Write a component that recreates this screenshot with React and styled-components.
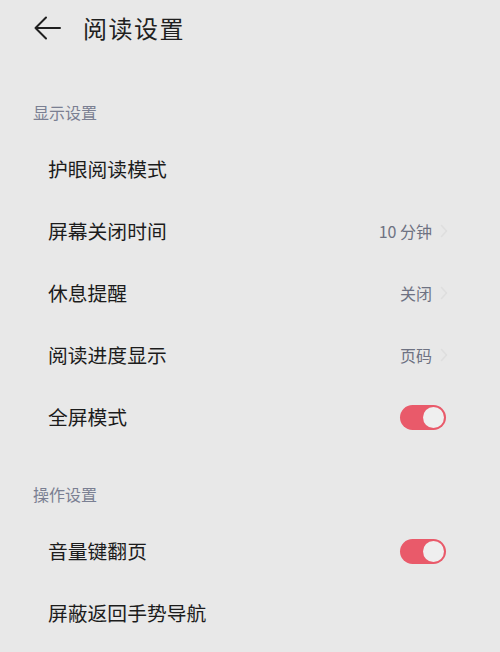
import React from "react";
import styled, { createGlobalStyle } from "styled-components";

const Global = createGlobalStyle`
  html, body { margin: 0; padding: 0; background: #e8e8e8; }
  body { font-family: "Noto Sans CJK SC", "Noto Sans", sans-serif; }
`;

const Page = styled.div`
  width: 500px;
  height: 652px;
  background: #e8e8e8;
  overflow: hidden;
`;

const Header = styled.div`
  display: flex;
  align-items: center;
  height: 56px;
  padding-left: 34px;
  gap: 22px;
`;

const BackBtn = styled.div`
  width: 27px;
  height: 24px;
  display: flex;
  align-items: center;
  justify-content: center;
`;

const Title = styled.div`
  font-size: 24px;
  color: #1f1f1f;
  letter-spacing: 1.5px;
  line-height: 1;
`;

const SectionTitle = styled.div`
  font-size: 16px;
  color: #7a7f92;
  padding-left: 33px;
  line-height: 1;
  margin-top: ${(p) => p.$top}px;
  margin-bottom: 18px;
`;

const Row = styled.div`
  display: flex;
  align-items: center;
  justify-content: space-between;
  height: 62px;
  padding-left: 48px;
  padding-right: 54px;
`;

const Label = styled.div`
  font-size: 19.8px;
  color: #1c1c1c;
  line-height: 1;
`;

const Right = styled.div`
  display: flex;
  align-items: center;
  gap: 8px;
  margin-right: -2px;
`;

const Value = styled.div`
  font-size: 16px;
  color: #6e7282;
  line-height: 1;
`;

const Toggle = styled.div`
  width: 46px;
  height: 25px;
  border-radius: 13px;
  background: #e95a6a;
  position: relative;
  &::after {
    content: "";
    position: absolute;
    right: 2px;
    top: 2px;
    width: 21px;
    height: 21px;
    border-radius: 50%;
    background: #efefef;
  }
`;

const Chevron = () => (
  <svg width="8" height="14" viewBox="0 0 8 14">
    <path d="M1.5 1.5 L6.5 7 L1.5 12.5" fill="none" stroke="#dedede" strokeWidth="1.6" strokeLinecap="round" strokeLinejoin="round" />
  </svg>
);

const Arrow = () => (
  <svg width="27" height="24" viewBox="0 0 27 24">
    <path d="M12 1.5 L1.5 12 L12 22.5 M1.5 12 H26" fill="none" stroke="#1f1f1f" strokeWidth="2" strokeLinecap="round" strokeLinejoin="round" />
  </svg>
);

const Item = ({ label, value, toggle }) => (
  <Row>
    <Label>{label}</Label>
    {toggle ? (
      <Toggle />
    ) : value ? (
      <Right>
        <Value>{value}</Value>
        <Chevron />
      </Right>
    ) : null}
  </Row>
);

export default function App() {
  return (
    <Page>
      <Global />
      <Header>
        <BackBtn><Arrow /></BackBtn>
        <Title>阅读设置</Title>
      </Header>
      <SectionTitle $top={48}>显示设置</SectionTitle>
      <Item label="护眼阅读模式" />
      <Item label="屏幕关闭时间" value="10 分钟" />
      <Item label="休息提醒" value="关闭" />
      <Item label="阅读进度显示" value="页码" />
      <Item label="全屏模式" toggle />
      <SectionTitle $top={38}>操作设置</SectionTitle>
      <Item label="音量键翻页" toggle />
      <Item label="屏蔽返回手势导航" />
    </Page>
  );
}
